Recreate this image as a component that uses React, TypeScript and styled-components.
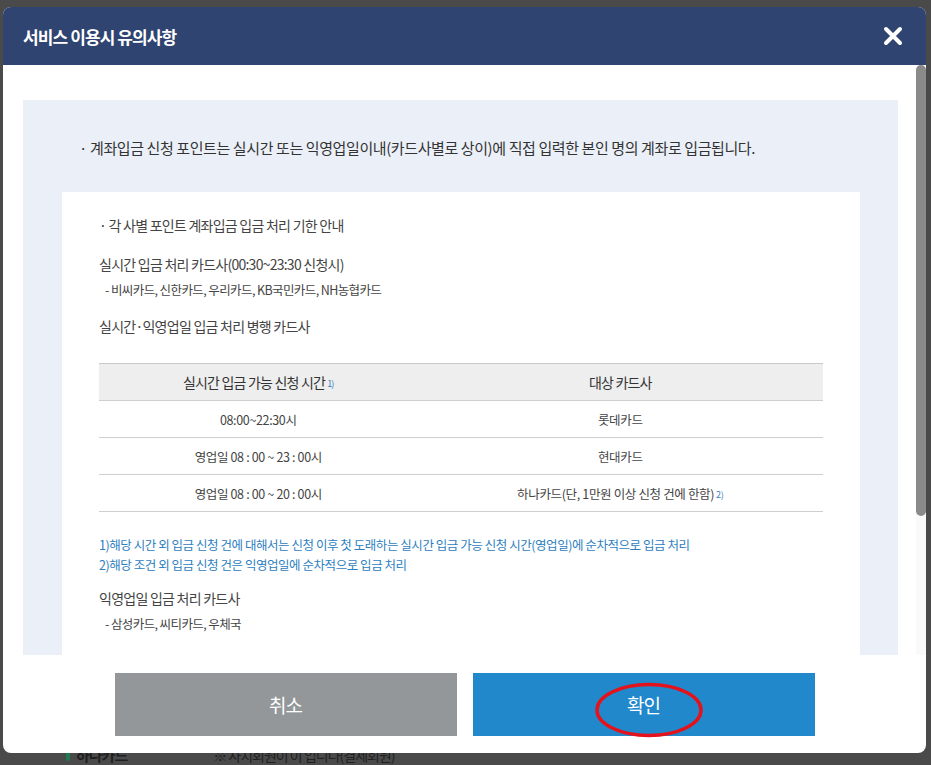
import { createGlobalStyle, styled } from 'styled-components'

const GlobalStyle = createGlobalStyle`
  html, body {
    margin: 0;
    padding: 0;
    background: #4a4a4a;
    font-family: "Noto Sans CJK KR", "Noto Sans", sans-serif;
  }
  * {
    box-sizing: border-box;
  }
`

const Page = styled.div`
  position: relative;
  width: 931px;
  height: 765px;
  overflow: hidden;
`

const BehindRow = styled.div`
  display: flex;
  align-items: center;
  gap: 86px;
  padding: 744px 0 0 66px;
  color: #1f1f1f;
  font-size: 15px;
`

const BehindBrand = styled.span`
  display: flex;
  align-items: center;
  gap: 6px;
  font-weight: 700;
  letter-spacing: -1px;

  &::before {
    content: '';
    width: 4px;
    height: 12px;
    border-radius: 2px;
    background: #1f7a4d;
  }
`

const BehindNote = styled.span`
  font-size: 14px;
  letter-spacing: -1px;
`

const Modal = styled.div`
  position: absolute;
  left: 3px;
  top: 7px;
  width: 923px;
  height: 746px;
  display: flex;
  flex-direction: column;
  background: #fff;
  border-radius: 8px;
  overflow: hidden;
`

const Header = styled.div`
  height: 58px;
  flex-shrink: 0;
  display: flex;
  align-items: center;
  justify-content: space-between;
  padding: 0 22px 0 20px;
  background: #2f4470;
`

const Title = styled.h1`
  margin: 0;
  color: #fff;
  font-size: 17px;
  font-weight: 700;
  letter-spacing: -0.9px;
`

const CloseButton = styled.button`
  width: 22px;
  height: 22px;
  padding: 0;
  border: 0;
  background: none;
  display: flex;
  align-items: center;
  justify-content: center;
`

const Body = styled.div`
  height: 590px;
  flex-shrink: 0;
  display: flex;
`

const Scroller = styled.div`
  flex: 1;
  overflow: hidden;
  padding: 35px 18px 0 20px;
`

const ScrollTrack = styled.div`
  width: 10px;
  flex-shrink: 0;
  background: #fafafa;
`

const ScrollThumb = styled.div`
  height: 451px;
  border-radius: 5px;
  background: #8a8a8a;
`

const Panel = styled.div`
  background: #ebf0f8;
  padding: 38px 38px 40px 39px;
`

const Intro = styled.p`
  margin: 0 0 34px;
  padding-left: 17px;
  color: #333;
  font-size: 15px;
  line-height: 20px;
  letter-spacing: -0.4px;
`

const InfoBox = styled.div`
  background: #fff;
  padding: 24px 37px 40px;
  color: #444;
`

const BoxTitle = styled.p<{ $gap?: number; $top?: number }>`
  margin: ${({ $top }) => $top ?? 0}px 0 ${({ $gap }) => $gap ?? 0}px;
  font-size: 14px;
  line-height: 18px;
  letter-spacing: -0.75px;
`

const SubList = styled.p`
  margin: 0;
  padding-left: 6px;
  font-size: 12.5px;
  line-height: 16px;
  letter-spacing: -0.6px;
`

const Table = styled.table`
  width: 100%;
  margin-top: 28px;
  border-collapse: collapse;
  border-top: 1px solid #c9c9c9;
  text-align: center;
`

const HeadCell = styled.th<{ $width?: string }>`
  height: 37px;
  width: ${({ $width }) => $width ?? 'auto'};
  background: #eeeeee;
  border-bottom: 1px solid #cfcfcf;
  color: #333;
  font-size: 14px;
  font-weight: 400;
  letter-spacing: -0.8px;
`

const Cell = styled.td`
  height: 37px;
  border-bottom: 1px solid #cfcfcf;
  color: #444;
  font-size: 12.5px;
  letter-spacing: -0.35px;
`

const Mark = styled.sup`
  margin-left: 2px;
  color: #3a7fc2;
  font-size: 9px;
  vertical-align: 1px;
`

const Notes = styled.div`
  margin: 23px 0 14px;
  color: #2e80bf;
  font-size: 12.5px;
  line-height: 20px;
  letter-spacing: -0.45px;
`

const Footer = styled.div`
  flex: 1;
  display: flex;
  justify-content: center;
  gap: 16px;
  padding-top: 18px;
`

const ActionButton = styled.button<{ $primary?: boolean }>`
  position: relative;
  width: 342px;
  height: 63px;
  border: 0;
  background: ${({ $primary }) => ($primary ? '#2288cc' : '#939799')};
  color: #fff;
  font-family: inherit;
  font-size: 19px;
  letter-spacing: -1px;
`

const Highlight = styled.svg`
  position: absolute;
  left: 121px;
  top: 9px;
  pointer-events: none;
`

const rows = [
  { time: '08:00~22:30시', card: '롯데카드' },
  { time: '영업일 08 : 00 ~ 23 : 00시', card: '현대카드' },
  { time: '영업일 08 : 00 ~ 20 : 00시', card: '하나카드(단, 1만원 이상 신청 건에 한함)', mark: '2)' },
]

const App = () => {
  return (
    <>
      <GlobalStyle />
      <Page>
        <BehindRow>
          <BehindBrand>하나카드</BehindBrand>
          <BehindNote>※ 사치회원이 이 입니다(결제회원)</BehindNote>
        </BehindRow>

        <Modal>
          <Header>
            <Title>서비스 이용시 유의사항</Title>
            <CloseButton aria-label="닫기">
              <svg width="20" height="20" viewBox="0 0 20 20">
                <path d="M3 3 L17 17 M17 3 L3 17" stroke="#fff" strokeWidth="4" strokeLinecap="round" />
              </svg>
            </CloseButton>
          </Header>

          <Body>
            <Scroller>
              <Panel>
                <Intro>· 계좌입금 신청 포인트는 실시간 또는 익영업일이내(카드사별로 상이)에 직접 입력한 본인 명의 계좌로 입금됩니다.</Intro>

                <InfoBox>
                  <BoxTitle $gap={21}>· 각 사별 포인트 계좌입금 입금 처리 기한 안내</BoxTitle>
                  <BoxTitle $gap={9}>실시간 입금 처리 카드사(00:30~23:30 신청시)</BoxTitle>
                  <SubList>- 비씨카드, 신한카드, 우리카드, KB국민카드, NH농협카드</SubList>
                  <BoxTitle $top={19}>실시간·익영업일 입금 처리 병행 카드사</BoxTitle>

                  <Table>
                    <thead>
                      <tr>
                        <HeadCell $width="44%">실시간 입금 가능 신청 시간<Mark>1)</Mark></HeadCell>
                        <HeadCell>대상 카드사</HeadCell>
                      </tr>
                    </thead>
                    <tbody>
                      {rows.map((row) => (
                        <tr key={row.time + row.card}>
                          <Cell>{row.time}</Cell>
                          <Cell>
                            {row.card}
                            {row.mark && <Mark>{row.mark}</Mark>}
                          </Cell>
                        </tr>
                      ))}
                    </tbody>
                  </Table>

                  <Notes>
                    <div>1)해당 시간 외 입금 신청 건에 대해서는 신청 이후 첫 도래하는 실시간 입금 가능 신청 시간(영업일)에 순차적으로 입금 처리</div>
                    <div>2)해당 조건 외 입금 신청 건은 익영업일에 순차적으로 입금 처리</div>
                  </Notes>

                  <BoxTitle $gap={9}>익영업일 입금 처리 카드사</BoxTitle>
                  <SubList>- 삼성카드, 씨티카드, 우체국</SubList>
                </InfoBox>
              </Panel>
            </Scroller>
            <ScrollTrack>
              <ScrollThumb />
            </ScrollTrack>
          </Body>

          <Footer>
            <ActionButton>취소</ActionButton>
            <ActionButton $primary>
              확인
              <Highlight width="110" height="56" viewBox="0 0 110 56">
                <ellipse cx="55" cy="28" rx="52" ry="25.5" fill="none" stroke="#e3121b" strokeWidth="3.5" />
              </Highlight>
            </ActionButton>
          </Footer>
        </Modal>
      </Page>
    </>
  )
}

export default App
